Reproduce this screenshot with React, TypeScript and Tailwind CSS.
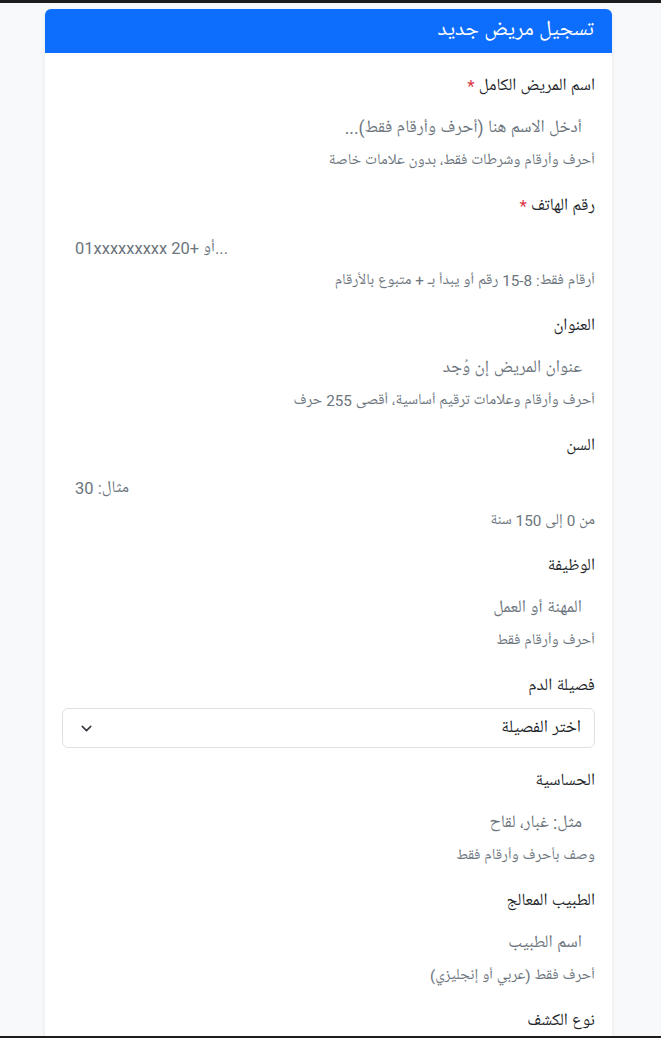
import { ChevronDown } from 'lucide-react';

interface Field {
  label: string;
  placeholder: string;
  help: string;
  required?: boolean;
  ltr?: boolean;
}

const topFields: Field[] = [
  { label: 'اسم المريض الكامل', placeholder: 'أدخل الاسم هنا (أحرف وأرقام فقط)...', help: 'أحرف وأرقام وشرطات فقط، بدون علامات خاصة', required: true },
  { label: 'رقم الهاتف', placeholder: '01xxxxxxxxx أو +20...', help: 'أرقام فقط: 8-15 رقم أو يبدأ بـ + متبوع بالأرقام', required: true, ltr: true },
  { label: 'العنوان', placeholder: 'عنوان المريض إن وُجد', help: 'أحرف وأرقام وعلامات ترقيم أساسية، أقصى 255 حرف' },
  { label: 'السن', placeholder: 'مثال: 30', help: 'من 0 إلى 150 سنة', ltr: true },
  { label: 'الوظيفة', placeholder: 'المهنة أو العمل', help: 'أحرف وأرقام فقط' },
];

const bottomFields: Field[] = [
  { label: 'الحساسية', placeholder: 'مثل: غبار، لقاح', help: 'وصف بأحرف وأرقام فقط' },
  { label: 'الطبيب المعالج', placeholder: 'اسم الطبيب', help: 'أحرف فقط (عربي أو إنجليزي)' },
];

function Label({ text, required }: { text: string; required?: boolean }) {
  return (
    <label className="mb-[11px] block text-[17px] leading-[24px] text-[#212529]">
      {text}
      {required && <span className="text-[#dc3545]"> *</span>}
    </label>
  );
}

function TextField({ f }: { f: Field }) {
  return (
    <div className="mb-[22px]">
      <Label text={f.label} required={f.required} />
      {f.ltr ? (
        <input
          type="text"
          dir="ltr"
          placeholder={f.placeholder}
          className="block h-[38px] w-full border-0 bg-transparent px-[13px] text-[16.5px] text-[#212529] outline-none placeholder:text-[#6c757d]"
        />
      ) : (
        <input
          type="text"
          placeholder={f.placeholder}
          className="block h-[38px] w-full border-0 bg-transparent px-[13px] text-[17.5px] text-[#212529] outline-none placeholder:text-[#6c757d]"
        />
      )}
      <p className="mt-1 text-[15.3px] leading-[21px] text-[#6c757d]">{f.help}</p>
    </div>
  );
}

export default function App() {
  return (
    <div dir="rtl" className="flex h-[1038px] flex-col overflow-hidden bg-[#f8f9fa] font-['Roboto','Noto_Naskh_Arabic_UI','Noto_Naskh_Arabic','Noto_Sans_Arabic','DejaVu_Sans',sans-serif]">
      <div className="h-[3px] shrink-0 bg-[#1c1c1c]" />
      <div className="flex-1 overflow-hidden pt-[6px]">
        <div className="mr-[49px] w-[567px] rounded-[6px] bg-white shadow-[0_0.125rem_0.35rem_rgba(0,0,0,0.08)]">
          <div className="flex h-[44px] items-center rounded-t-[6px] bg-[#0d6efd] px-[18px] text-[21.5px] text-white">
            تسجيل مريض جديد
          </div>
          <div className="px-[17px] pb-[40px] pt-[21px]">
            {topFields.map((f) => (
              <TextField key={f.label} f={f} />
            ))}

            <div className="mb-[21px]">
              <label className="mb-[10px] block text-[17px] leading-[24px] text-[#212529]">فصيلة الدم</label>
              <div className="flex h-[40px] items-center justify-between rounded-[6px] border border-[#dee2e6] pl-[15px] pr-[13px] text-[17.5px] text-[#212529]">
                <span>اختر الفصيلة</span>
                <ChevronDown className="h-[17px] w-[17px] text-[#343a40]" strokeWidth={2.2} />
              </div>
            </div>

            {bottomFields.map((f) => (
              <TextField key={f.label} f={f} />
            ))}

            <Label text="نوع الكشف" />
          </div>
        </div>
      </div>
      <div className="h-[2px] shrink-0 bg-[#1c1c1c]" />
    </div>
  );
}
